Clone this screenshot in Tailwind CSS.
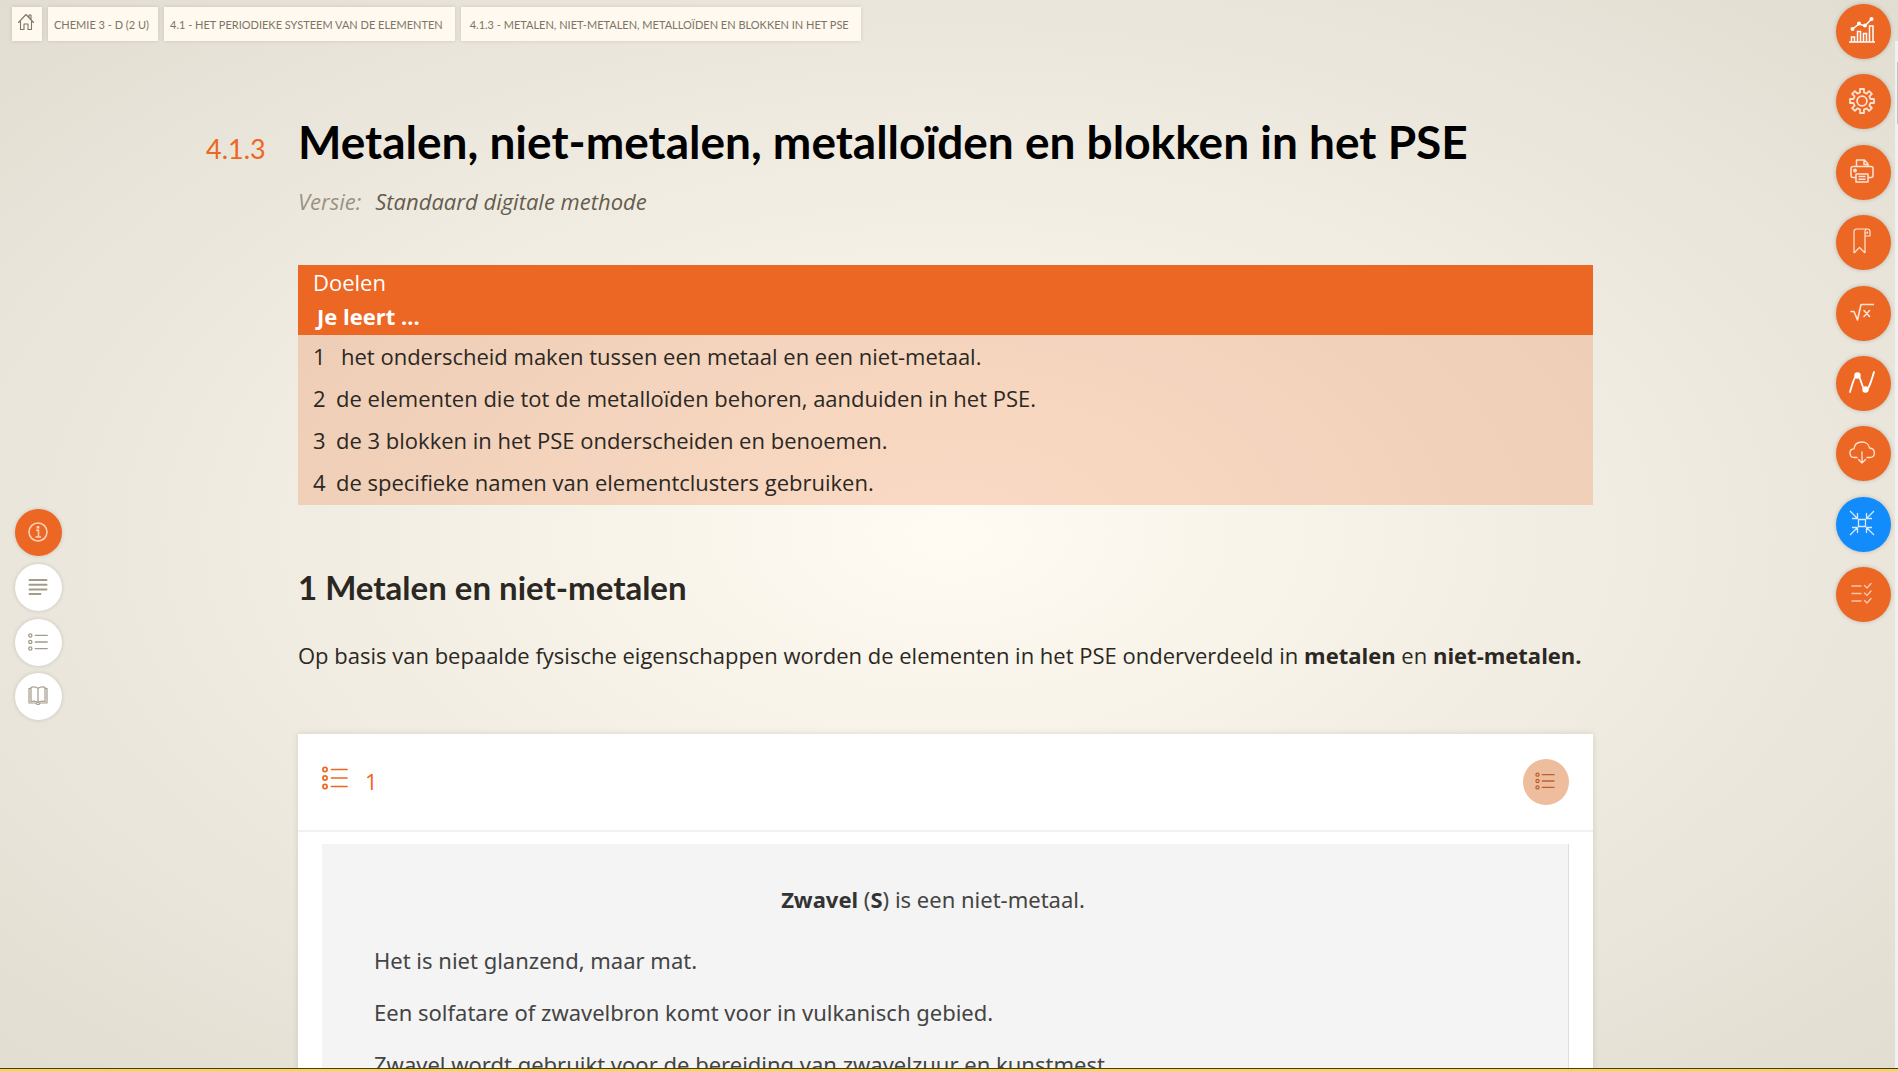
<!DOCTYPE html>
<html lang="nl">
<head>
<meta charset="utf-8">
<title>Metalen, niet-metalen, metalloïden en blokken in het PSE</title>
<script src="https://cdn.jsdelivr.net/npm/@tailwindcss/browser@4"></script>
</head>
<body class="flex h-screen flex-col overflow-hidden bg-[radial-gradient(ellipse_at_center,#fffbf2,#e2ddd1)] font-['Open_Sans','Noto_Sans',sans-serif] text-[22px] text-[#2b2823]">

<!-- shared symbols -->
<svg class="hidden" aria-hidden="true">
  <symbol id="list" viewBox="0 0 26 24">
    <g fill="none" stroke="currentColor">
      <g stroke-width="1.7"><circle cx="3" cy="3.5" r="2.1"/><circle cx="3" cy="12" r="2.1"/><circle cx="3" cy="20.500" r="2.1"/></g>
      <path stroke-width="1.7" stroke-linecap="round" d="M9.500 3.500h15.500M9.500 12h15.500M9.500 20.500h15.500"/>
    </g>
  </symbol>
</svg>

<div class="flex min-h-0 flex-1">
  <div class="flex min-w-0 flex-1 flex-col">
    <nav aria-label="Kruimelpad" class="mt-[7px] ml-3 flex h-[34px] shrink-0 gap-[6px] font-['Lato',sans-serif] text-[11px] text-[#7b7566] uppercase">
      <a href="#" aria-label="Home" class="flex w-[30px] items-center justify-center bg-[#fff9ef] shadow-[0_0_4px_rgba(0,0,0,0.12)]">
        <svg class="mr-[2px] mb-1 size-[18px]" viewBox="0 0 18 18" fill="none" stroke="currentColor" stroke-width="1.1" stroke-linejoin="round" stroke-linecap="round"><path d="M1.500 9.500 9 1.500l7.500 8M12 4.500v-2.500h2v4.600M3.500 8.500v8h3.500v-5.500h4v5.500h3.500v-8"/></svg>
      </a>
      <a href="#" class="flex items-center bg-[#fff9ef] pt-[2px] pr-[9px] pl-[6px] whitespace-nowrap shadow-[0_0_4px_rgba(0,0,0,0.12)]">Chemie 3 - D (2 u)</a>
      <a href="#" class="flex items-center bg-[#fff9ef] pt-[2px] pr-3 pl-[6px] whitespace-nowrap shadow-[0_0_4px_rgba(0,0,0,0.12)]">4.1 - Het periodieke systeem van de elementen</a>
      <a href="#" class="flex items-center bg-[#fff9ef] pt-[2px] pr-3 pl-[9px] whitespace-nowrap shadow-[0_0_4px_rgba(0,0,0,0.12)]">4.1.3 - Metalen, niet-metalen, metalloïden en blokken in het PSE</a>
    </nav>

    <div class="flex min-h-0 flex-1 overflow-hidden">
      <aside class="flex w-[72px] shrink-0 flex-col gap-[7px] pt-[468px] pl-[15px] text-[#a39c8b]">
        <button aria-label="Informatie" class="flex size-[47px] items-center justify-center rounded-full bg-[#ec6724] text-[#fbd3bd] shadow-[0_0_4px_rgba(0,0,0,0.15)]">
          <svg class="mr-[2px] mb-[2px] size-5" viewBox="0 0 20 20" fill="none" stroke="currentColor" stroke-width="1.500"><circle cx="10" cy="10" r="9"/><path d="M8 8.300h2.500v6.500M7.500 15h5.500"/><circle cx="10" cy="5.200" r=".8" fill="currentColor"/></svg>
        </button>
        <button aria-label="Tekst" class="mt-px flex size-[47px] items-center justify-center rounded-full bg-white shadow-[0_0_4px_rgba(0,0,0,0.15)]">
          <svg class="mr-[2px] mb-[2px] size-5" viewBox="0 0 20 20" fill="none" stroke="currentColor" stroke-width="2" stroke-linecap="round"><path d="M1.500 3h17M1.500 7.700h17M1.500 12.400h17M1.500 17.100h11"/></svg>
        </button>
        <button aria-label="Lijst" class="mt-px flex size-[47px] items-center justify-center rounded-full bg-white shadow-[0_0_4px_rgba(0,0,0,0.15)]">
          <svg class="mr-[2px] mb-[2px] size-5"><use href="#list"/></svg>
        </button>
        <button aria-label="Boek" class="flex size-[47px] items-center justify-center rounded-full bg-white shadow-[0_0_4px_rgba(0,0,0,0.15)]">
          <svg class="mr-[2px] mb-[2px] size-5" viewBox="0 0 20 20" fill="none" stroke="currentColor" stroke-width="1.200" stroke-linejoin="round"><path d="M10 2.200C8 .8 5 .6 3 1.200v14.300c2-.6 5-.4 7 1 2-1.400 5-1.600 7-1V1.200c-2-.6-5-.4-7 1zM10 2.200v14M3 2.500H1v14.500h7c.5 2 3.500 2 4 0h7V2.500h-2"/></svg>
        </button>
      </aside>

      <main class="min-w-0 flex-1 pt-[73px] pr-[243px] pl-[134px]">
        <header class="flex items-baseline">
          <span class="w-[92px] shrink-0 font-['Lato',sans-serif] text-[27px] text-[#ec6724]">4.1.3</span>
          <h1 class="font-['Lato',sans-serif] text-[46px] leading-[56px] font-bold whitespace-nowrap text-black">Metalen, niet-metalen, metalloïden en blokken in het PSE</h1>
        </header>

        <div class="pl-[92px]">
          <p class="mt-[15px] flex gap-[14px] leading-8 italic"><span class="text-[#9a9284]">Versie:</span><span class="text-[#655c4e]">Standaard digitale methode</span></p>

          <section class="mt-12 bg-[#ec6724]/22">
            <header class="bg-[#ec6724] px-[15px] pb-[2px] leading-[34px] text-white">
              <h2>Doelen</h2>
              <p class="pl-1 font-bold">Je leert ...</p>
            </header>
            <ol class="px-[15px] pb-[2px] leading-[42px]">
              <li class="flex"><span class="w-7">1</span>het onderscheid maken tussen een metaal en een niet-metaal.</li>
              <li class="flex"><span class="w-[23px]">2</span>de elementen die tot de metalloïden behoren, aanduiden in het PSE.</li>
              <li class="flex"><span class="w-[23px]">3</span>de 3 blokken in het PSE onderscheiden en benoemen.</li>
              <li class="flex"><span class="w-[23px]">4</span>de specifieke namen van elementclusters gebruiken.</li>
            </ol>
          </section>

          <h2 class="mt-[60px] font-['Lato',sans-serif] text-[33px] leading-[44px] font-bold">1 Metalen en niet-metalen</h2>
          <p class="mt-[30px] leading-8 whitespace-nowrap">Op basis van bepaalde fysische eigenschappen worden de elementen in het PSE onderverdeeld in <strong class="font-bold">metalen</strong> en <strong class="font-bold">niet-metalen.</strong></p>

          <article class="mt-[63px] bg-white shadow-[0_0_6px_rgba(0,0,0,0.12)]">
            <header class="flex h-[98px] items-center border-b-2 border-[#f3f1ed] px-6 text-[#ec6724]">
              <svg class="mb-2 h-6 w-[26px]"><use href="#list"/></svg>
              <span class="ml-[17px] pb-[2px]">1</span>
              <button aria-label="Opdracht" class="ml-auto flex size-[46px] items-center justify-center rounded-full bg-[#edbd9e] text-[#b8622f]"><svg class="mr-[3px] mb-[2px] h-[18px] w-5"><use href="#list"/></svg></button>
            </header>
            <div class="mx-6 mt-3 flex flex-col gap-5 border-r border-[#dedede] bg-[#f4f4f4] pt-[39px] pr-[76px] pb-10 pl-[52px] font-['Noto_Sans',sans-serif] leading-8 text-[#444]">
              <p class="pb-[9px] text-center"><strong class="font-bold text-[#333]">Zwavel</strong> (<strong class="font-bold text-[#333]">S</strong>) is een niet-metaal.</p>
              <p>Het is niet glanzend, maar mat.</p>
              <p>Een solfatare of zwavelbron komt voor in vulkanisch gebied.</p>
              <p>Zwavel wordt gebruikt voor de bereiding van zwavelzuur en kunstmest.</p>
            </div>
          </article>
        </div>
      </main>
    </div>
  </div>

  <!-- tool buttons -->
  <aside class="mt-1 flex h-[618px] w-[59px] shrink-0 flex-col justify-between text-[#fde3d5]">
    <button aria-label="Resultaten" class="flex size-[55px] items-center justify-center rounded-full bg-[#ec6724] shadow-[0_0_4px_rgba(0,0,0,0.2)]">
      <svg class="mr-1 mb-[3px] size-[26px]" viewBox="0 0 26 26" fill="none" stroke="#fff" stroke-width="1.500"><path d="M0 25h26M2.500 25v-5h3v5M8.500 25V14.500h3V25M14.500 25v-8.500h3V25M20.500 25V9h3.500v16"/><path d="M3.500 12 10 7l6 2 6.500-7"/><g fill="#fff" stroke="none"><circle cx="3.500" cy="12" r="2"/><circle cx="10" cy="6.500" r="2"/><circle cx="16" cy="8.500" r="2"/><circle cx="22.500" cy="2" r="2"/></g></svg>
    </button>
    <button aria-label="Instellingen" class="flex size-[55px] items-center justify-center rounded-full bg-[#ec6724] shadow-[0_0_4px_rgba(0,0,0,0.2)]">
      <svg class="mr-1 mb-[2px] size-[26px]" viewBox="0 0 26 26" fill="none" stroke="currentColor" stroke-width="1.800" stroke-linejoin="round"><path d="M11 1h4v3.500l2.600 1.100 2.500-2.500 2.800 2.800-2.500 2.500 1.100 2.600H25v4h-3.500l-1.100 2.600 2.500 2.500-2.800 2.800-2.500-2.500-2.600 1.100V25h-4v-3.500l-2.600-1.100-2.500 2.500-2.800-2.800 2.500-2.500L4.500 15H1v-4h3.500l1.100-2.600-2.500-2.500 2.800-2.800 2.500 2.500L11 4.500z"/><circle cx="13" cy="13" r="4.900"/></svg>
    </button>
    <button aria-label="Afdrukken" class="flex size-[55px] items-center justify-center rounded-full bg-[#ec6724] shadow-[0_0_4px_rgba(0,0,0,0.2)]">
      <svg class="mr-1 mb-[3px] size-6" viewBox="0 0 24 24" fill="none" stroke="currentColor" stroke-width="1.500" stroke-linejoin="round"><path d="M6.500 7.500V1h8l3.500 4v2.500M14 1v4.500h4M5.500 18.500H3a2 2 0 0 1-2-2v-7a2 2 0 0 1 2-2h18a2 2 0 0 1 2 2v7a2 2 0 0 1-2 2h-2.500M6 15h12v8H6zM8.500 17.500h7M8.500 20.200h7"/><circle cx="5" cy="11.500" r="1.200" fill="currentColor"/></svg>
    </button>
    <button aria-label="Bladwijzer" class="flex size-[55px] items-center justify-center rounded-full bg-[#ec6724] shadow-[0_0_4px_rgba(0,0,0,0.2)]">
      <svg class="mr-1 mb-[3px] h-[26px] w-[18px]" viewBox="0 0 18 26" fill="none" stroke="currentColor" stroke-width="1.200" stroke-linejoin="round"><path d="M1 25V3.500A2.500 2.500 0 0 1 3.500 1h11C16 1 17 2 17 3.500V8h-5M12 25V4c0-2 1-3 2.500-3M1 25l5.500-5.500L12 25M12 5h2.500V3.500"/></svg>
    </button>
    <button aria-label="Formules" class="flex size-[55px] items-center justify-center rounded-full bg-[#ec6724] shadow-[0_0_4px_rgba(0,0,0,0.2)]">
      <svg class="mr-1 mb-[3px] h-[18px] w-6" viewBox="0 0 24 18" fill="none" stroke="currentColor" stroke-width="1.600" stroke-linecap="round" stroke-linejoin="round"><path d="M1 8.500h3L7.500 17 11 1.500h12.500"/><path d="m14 7.500 5.500 6M19.500 7.500l-5.500 6"/></svg>
    </button>
    <button aria-label="Grafieken" class="flex size-[55px] items-center justify-center rounded-full bg-[#ec6724] shadow-[0_0_4px_rgba(0,0,0,0.2)]">
      <svg class="mr-1 mb-[2px] h-[22px] w-[26px]" viewBox="0 0 26 22" fill="none" stroke="#fff" stroke-width="1.800" stroke-linecap="round"><path d="M1 21C3 14 5.500 4 8.500 4S13 19 16.500 19 22.500 9 25 1"/><circle cx="8.500" cy="4.500" r="2.300" fill="#fff"/><circle cx="16.500" cy="18.500" r="2.300" fill="#fff"/></svg>
    </button>
    <button aria-label="Downloaden" class="flex size-[55px] items-center justify-center rounded-full bg-[#ec6724] shadow-[0_0_4px_rgba(0,0,0,0.2)]">
      <svg class="mr-1 mb-[3px] h-[23px] w-[26px]" viewBox="0 0 26 23" fill="none" stroke="currentColor" stroke-width="1.300" stroke-linecap="round" stroke-linejoin="round"><path d="M8 16.500H5.500c-6 0-6-8.500-.5-8.700C5.500 3 9 1 13 1s7 2.500 7.500 6c6.500.5 6.500 9.500 0 9.500H18M13 11v11M9.500 18.500 13 22l3.500-3.500"/></svg>
    </button>
    <button aria-label="Volledig scherm verlaten" class="flex size-[55px] items-center justify-center rounded-full bg-[#128bfb] text-[#d3eaff] shadow-[0_0_4px_rgba(0,0,0,0.2)]">
      <svg class="mr-1 mb-[3px] size-[26px]" viewBox="0 0 26 26" fill="none" stroke="currentColor" stroke-width="1.300"><path d="M9.500 9.500h7v7h-7zM1 1l7.500 7.500M8.500 3v5.500H3M25 1l-7.500 7.500M17.500 3v5.500H23M1 25l7.500-7.500M3 17.500h5.500V23M25 25l-7.500-7.500M23 17.500h-5.500V23"/></svg>
    </button>
    <button aria-label="Takenlijst" class="flex size-[55px] items-center justify-center rounded-full bg-[#ec6724] text-[#f9c6ab] shadow-[0_0_4px_rgba(0,0,0,0.2)]">
      <svg class="mr-1 mb-[3px] h-[23px] w-[21px]" viewBox="0 0 21 23" fill="none" stroke="currentColor" stroke-width="1.400" stroke-linecap="round" stroke-linejoin="round"><path d="M1 4h9M1 11.500h9M1 19h9M13.500 3.500 16 6l4-4.500M13.500 11 16 13.500 20 9M13.500 18.500 16 21l4-4.500"/></svg>
    </button>
  </aside>

  <!-- scroll track -->
  <div class="mt-[41px] flex w-[3px] shrink-0 justify-end bg-[#f1f1f1] pt-[21px]"><div class="h-[62px] w-px bg-[#c1c1c1]"></div></div>
</div>

<div class="h-[3px] shrink-0 border-t border-[#3a3a44] bg-[#fbdb2c]"></div>
</body>
</html>
